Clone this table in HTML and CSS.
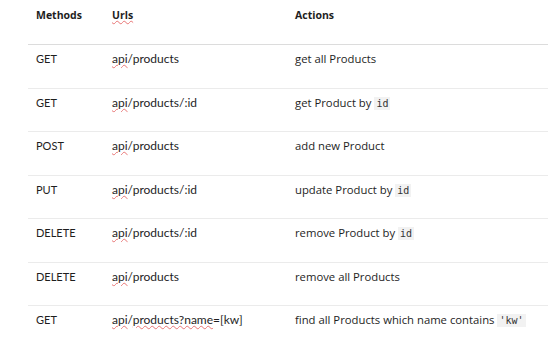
FILE: index.html
```html
<!DOCTYPE html>
<html>
<head>
<meta charset="utf-8">
<link rel="stylesheet" href="styles.css">
</head>
<body>
<table class="api">
  <thead>
    <tr><th class="c1">Methods</th><th class="c2"><span class="sp">Urls</span></th><th class="c3">Actions</th></tr>
  </thead>
  <tbody>
    <tr><td class="c1">GET</td><td class="c2"><span class="sp">api</span>/products</td><td class="c3">get all Products</td></tr>
    <tr><td class="c1">GET</td><td class="c2"><span class="sp">api</span>/products/:id</td><td class="c3">get Product by <code>id</code></td></tr>
    <tr><td class="c1">POST</td><td class="c2"><span class="sp">api</span>/products</td><td class="c3">add new Product</td></tr>
    <tr><td class="c1">PUT</td><td class="c2"><span class="sp">api</span>/products/:id</td><td class="c3">update Product by <code>id</code></td></tr>
    <tr><td class="c1">DELETE</td><td class="c2"><span class="sp">api</span>/products/:id</td><td class="c3">remove Product by <code>id</code></td></tr>
    <tr><td class="c1">DELETE</td><td class="c2"><span class="sp">api</span>/products</td><td class="c3">remove all Products</td></tr>
    <tr><td class="c1">GET</td><td class="c2"><span class="sp">api</span>/<span class="sp">products?name</span>=[kw]</td><td class="c3">find all Products which name contains <code>'kw'</code></td></tr>
  </tbody>
</table>
</body>
</html>
```
FILE: styles.css
```css
html, body {
  margin: 0;
  padding: 0;
  background: #ffffff;
}
.api {
  margin-left: 28px;
  width: 520px;
  border-collapse: collapse;
  color: #1e1e1e;
}
.api th, .api td {
  text-align: left;
  vertical-align: top;
  padding: 0 0 0 8px;
  white-space: nowrap;
}
.api th {
  font-family: "Open Sans", sans-serif;
  font-weight: 700;
  font-size: 10.5px;
  height: 37px;
  padding-top: 7px;
  line-height: 16px;
  border-bottom: 1px solid #dcdcdc;
}
.api td {
  height: 35.5px;
  padding-top: 7px;
  line-height: 14px;
  border-bottom: 1px solid #ebebeb;
}
.api tbody tr:last-child td {
  border-bottom: none;
}
.c1 { width: 68px; }
.c2 { width: 175px; }
td.c1 {
  font-family: Lato, sans-serif;
  font-size: 11px;
}
td.c2 {
  font-family: Lato, sans-serif;
  font-size: 12px;
}
td.c3 {
  font-family: "Open Sans", sans-serif;
  font-size: 11.3px;
}
.sp {
  text-decoration: underline wavy #e87575;
  text-decoration-thickness: 1px;
  text-underline-offset: 1px;
}
code {
  font-family: "DejaVu Sans Mono", monospace;
  font-size: 10px;
  background: #f2f2f2;
  padding: 1px 2px;
  color: #333;
}
```
